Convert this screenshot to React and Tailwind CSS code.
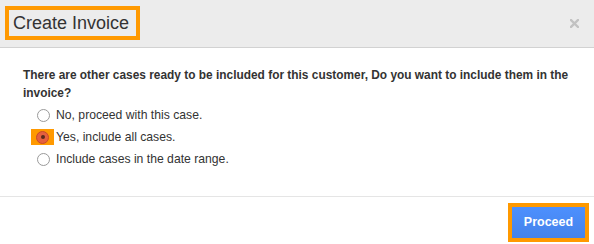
import { useState } from "react";

export default function App() {
  const [choice, setChoice] = useState("all");

  const options = [
    { id: "this", label: "No, proceed with this case." },
    { id: "all", label: "Yes, include all cases." },
    { id: "range", label: "Include cases in the date range." },
  ];

  return (
    <div className="w-[594px] h-[244px] bg-white flex flex-col text-[#333] font-['Liberation_Sans',Arial,sans-serif] overflow-hidden">
      {/* Header */}
      <div className="h-[48px] bg-[#ececec] border-b border-[#d2d2d2] flex items-start justify-between pl-[5px] pr-[15px] pt-[6px]">
        <div className="w-[135px] h-[34px] border-4 border-[#ff9900] pl-[4px] flex items-center text-[18px] leading-none text-[#333]">
          Create Invoice
        </div>
        <button className="mt-[13px] w-[9px] h-[9px] flex items-center justify-center">
          <svg width="9" height="9" viewBox="0 0 9 9">
            <path d="M1 1L8 8M8 1L1 8" stroke="#c2c2c2" strokeWidth="2.4" strokeLinecap="square" />
          </svg>
        </button>
      </div>

      {/* Body */}
      <div className="flex-1 pl-[23px] pr-[12px] pt-[18px]">
        <p className="text-[11.9px] leading-[18px] font-bold">
          There are other cases ready to be included for this customer, Do you want to include them in the invoice?
        </p>
        <div className="mt-[2px] pl-[14px] flex flex-col">
          {options.map((o) => {
            const selected = choice === o.id;
            return (
              <label
                key={o.id}
                onClick={() => setChoice(o.id)}
                className="h-[22px] flex items-center text-[12.2px] cursor-pointer"
              >
                {selected ? (
                  <span className="-ml-[6px] bg-[#ff9900] px-[5px] py-[1.5px] flex items-center">
                    <span className="w-[13px] h-[13px] rounded-full bg-[#e5603f] border border-[#c9482a] flex items-center justify-center">
                      <span className="w-[4px] h-[4px] rounded-full bg-[#5a2a1c]" />
                    </span>
                  </span>
                ) : (
                  <span className="w-[13px] h-[13px] rounded-full bg-white border border-[#9a9a9a]" />
                )}
                <span className={selected ? "ml-[2px]" : "ml-[6px]"}>{o.label}</span>
              </label>
            );
          })}
        </div>
      </div>

      {/* Footer */}
      <div className="h-[48px] border-t border-[#e5e5e5] flex items-start justify-end pr-[5px] pt-[6px]">
        <div className="border-4 border-[#ff9900]">
          <button className="w-[73px] h-[31px] bg-gradient-to-b from-[#4d90fe] to-[#4583ea] text-white text-[12.5px] font-bold">
            Proceed
          </button>
        </div>
      </div>
    </div>
  );
}
